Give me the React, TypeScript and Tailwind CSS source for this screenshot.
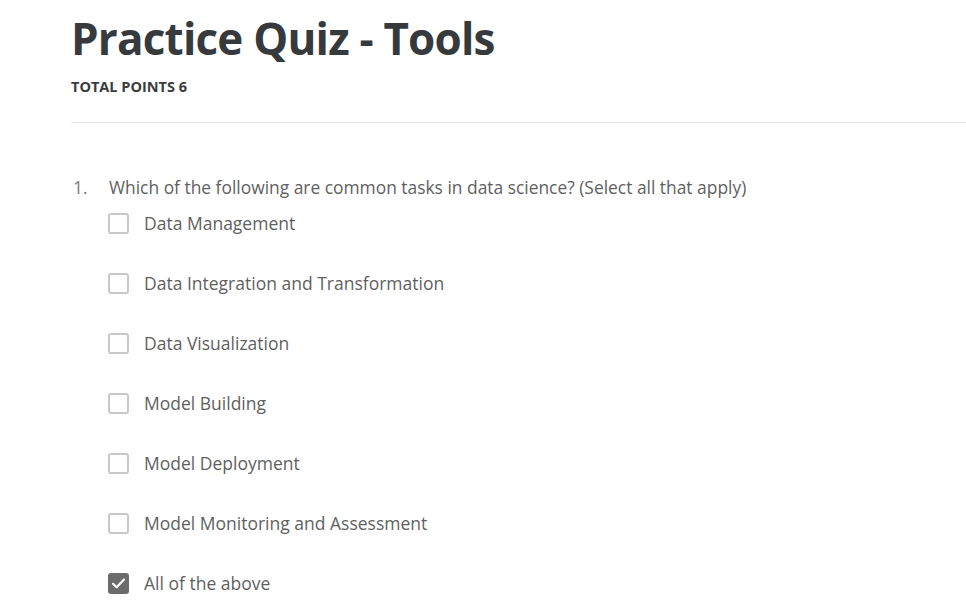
import React from 'react';

const options = [
  { label: 'Data Management', checked: false },
  { label: 'Data Integration and Transformation', checked: false },
  { label: 'Data Visualization', checked: false },
  { label: 'Model Building', checked: false },
  { label: 'Model Deployment', checked: false },
  { label: 'Model Monitoring and Assessment', checked: false },
  { label: 'All of the above', checked: true },
];

const Checkbox: React.FC<{ checked: boolean }> = ({ checked }) =>
  checked ? (
    <span className="w-[21px] h-[21px] rounded-[3px] bg-[#6b6b6b] flex items-center justify-center shrink-0">
      <svg width="17" height="17" viewBox="0 0 17 17" fill="none">
        <path d="M3 8.8 L6.6 12.2 L14 4.6" stroke="white" strokeWidth="2.2" strokeLinecap="round" strokeLinejoin="round" />
      </svg>
    </span>
  ) : (
    <span className="w-[21px] h-[21px] rounded-[3px] border-2 border-[#c8c8c8] bg-white shrink-0" />
  );

export default function App() {
  return (
    <div className="w-[966px] h-[612px] bg-white overflow-hidden font-['Open_Sans',sans-serif]">
      <div className="pl-[71px] pt-[10px]">
        <h1 className="text-[44px] leading-[56px] font-bold text-[#373a3c] tracking-[-0.8px]">Practice Quiz - Tools</h1>
        <div className="mt-[11px] text-[14.5px] leading-[20px] font-bold text-[#3c3c3c]">TOTAL POINTS 6</div>
        <div className="mt-[25px] border-t border-[#e6e6e6]" />

        <div className="flex mt-[52px] text-[17.4px] leading-[24px] text-[#5f5f5f]">
          <span className="w-[38px] pl-[2px] text-[#777]">1.</span>
          <span>Which of the following are common tasks in data science? (Select all that apply)</span>
        </div>

        <div className="flex flex-col gap-[39px] mt-[14px] pl-[37px]">
          {options.map((o) => (
            <div key={o.label} className="flex items-center gap-[15px] h-[21px]">
              <Checkbox checked={o.checked} />
              <span className="text-[17.5px] text-[#5f5f5f]">{o.label}</span>
            </div>
          ))}
        </div>
      </div>
    </div>
  );
}
